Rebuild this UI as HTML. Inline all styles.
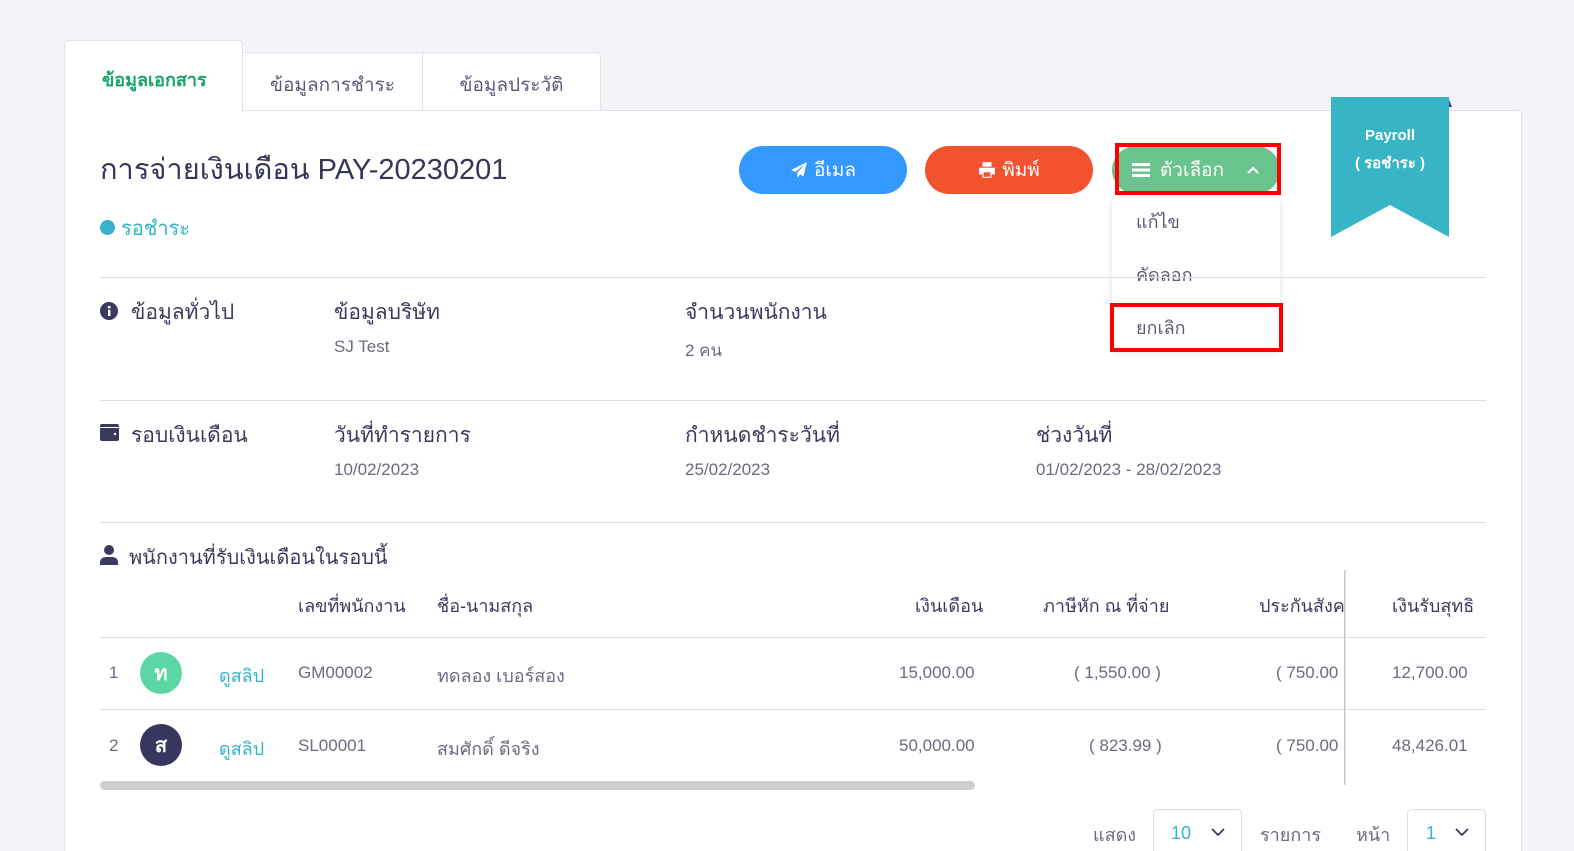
<!DOCTYPE html>
<html style="overflow:hidden;height:851px"><head><meta charset="utf-8"><style>
*{box-sizing:border-box;margin:0;padding:0}
body{width:1574px;height:851px;background:#f3f3f8;font-family:"Liberation Sans",sans-serif;color:#3a3a5e;position:relative;overflow:hidden}
.a{position:absolute;white-space:nowrap}
.card{position:absolute;left:64px;top:110px;width:1458px;height:750px;background:#fff;border:1px solid #e0e0ea;border-radius:4px}
.tab{position:absolute;background:#fff;border:1px solid #e0e0ea;border-bottom:none;text-align:center;font-size:19px;color:#5a5a78}
.hr{position:absolute;left:100px;width:1386px;height:1px;background:#dcdce6}
.lbl{font-size:21px;color:#3a3a5e}
.val{font-size:17px;color:#6b6b80}
.btn{position:absolute;height:48px;border-radius:24px;color:#fff;font-size:19px;display:flex;align-items:center;justify-content:center;gap:6px}
.th{font-size:18px;color:#3a3a5e}
.td{font-size:17px;color:#6b6b80}
.av{position:absolute;width:42px;height:42px;border-radius:50%;color:#fff;font-weight:bold;font-size:20px;display:flex;align-items:center;justify-content:center}
.sel{position:absolute;top:809px;height:50px;border:1px solid #dcdce6;border-radius:5px;background:#fff}
</style></head><body>
<div class="card"></div>
<div class="tab" style="left:64px;top:40px;width:179px;height:72px;border-radius:4px 4px 0 0;color:#1aa36a;font-weight:bold;padding-top:24px;font-size:18px;text-align:left;padding-left:37px">ข้อมูลเอกสาร</div>
<div class="tab" style="left:242px;top:52px;width:181px;height:58px;padding-top:17px;border-radius:0">ข้อมูลการชำระ</div>
<div class="tab" style="left:422px;top:52px;width:179px;height:58px;padding-top:17px;border-radius:0 4px 0 0">ข้อมูลประวัติ</div>

<div class="a" style="left:100px;top:146px;font-size:29px;color:#36365a">การจ่ายเงินเดือน PAY-20230201</div>
<div class="a" style="left:100px;top:220px;width:15px;height:15px;border-radius:50%;background:#35b3c8"></div>
<div class="a" style="left:121px;top:212px;font-size:20px;color:#35b3c8">รอชำระ</div>

<div class="btn" style="left:739px;top:146px;width:168px;background:#3399ff"><svg width="18" height="18" viewBox="0 0 16 16"><path d="M15 1L1 8l4 1.5L13 3 6.5 10.5V15l2.5-3 3 1.5z" fill="#fff"/></svg>อีเมล</div>
<div class="btn" style="left:925px;top:146px;width:168px;background:#f2522e"><svg width="18" height="18" viewBox="0 0 16 16"><path d="M4 1h8v4H4zM1 6h14v6h-3v3H4v-3H1zM5 10v4h6v-4z" fill="#fff"/></svg>พิมพ์</div>
<div class="btn" style="left:1112px;top:146px;width:168px;background:#6ac48d;gap:10px"><svg width="18" height="16" viewBox="0 0 18 16"><path d="M0 1h18v3H0zM0 6.5h18v3H0zM0 12h18v3H0z" fill="#fff"/></svg>ตัวเลือก<svg width="14" height="10" viewBox="0 0 14 10" style="margin-left:12px"><path d="M2 8l5-5 5 5" stroke="#fff" stroke-width="2.2" fill="none"/></svg></div>
<div class="a" style="left:1115px;top:143px;width:166px;height:52px;border:4px solid #ff0000"></div>

<div class="a" style="left:1112px;top:198px;width:168px;height:152px;background:#fff;border-radius:6px;box-shadow:0 2px 8px rgba(0,0,0,.12)"></div>
<div class="a" style="left:1136px;top:207px;font-size:18px;color:#5a5a70">แก้ไข</div>
<div class="a" style="left:1136px;top:260px;font-size:18px;color:#5a5a70">คัดลอก</div>
<div class="a" style="left:1136px;top:313px;font-size:18px;color:#5a5a70">ยกเลิก</div>
<div class="a" style="left:1110px;top:303px;width:173px;height:49px;border:4px solid #ff0000"></div>

<svg class="a" style="left:1330px;top:97px" width="122" height="142" viewBox="0 0 122 142"><path d="M118 0l4 10h-4z" fill="#1f4f8a"/><path d="M1 0h118v140L60 108 1 140z" fill="#37b4c6"/></svg>
<div class="a" style="left:1331px;top:122px;width:118px;text-align:center;color:#fff;font-weight:bold;font-size:15px;line-height:28px">Payroll<br>( รอชำระ )</div>

<div class="hr" style="top:277px"></div>
<svg class="a" style="left:100px;top:302px" width="18" height="18" viewBox="0 0 18 18"><circle cx="9" cy="9" r="9" fill="#3a3a5e"/><rect x="8" y="8" width="2.4" height="6" fill="#fff"/><circle cx="9.2" cy="5.2" r="1.4" fill="#fff"/></svg>
<div class="a lbl" style="left:131px;top:296px">ข้อมูลทั่วไป</div>
<div class="a lbl" style="left:334px;top:296px">ข้อมูลบริษัท</div>
<div class="a val" style="left:334px;top:337px">SJ Test</div>
<div class="a lbl" style="left:685px;top:296px">จำนวนพนักงาน</div>
<div class="a val" style="left:685px;top:337px">2 คน</div>

<div class="hr" style="top:400px"></div>
<svg class="a" style="left:100px;top:424px" width="19" height="17" viewBox="0 0 19 17"><rect x="0" y="0" width="19" height="17" rx="2" fill="#3a3a5e"/><rect x="0" y="3" width="19" height="1" fill="#fff"/><circle cx="15" cy="10" r="1.2" fill="#fff"/></svg>
<div class="a lbl" style="left:131px;top:419px">รอบเงินเดือน</div>
<div class="a lbl" style="left:334px;top:419px">วันที่ทำรายการ</div>
<div class="a val" style="left:334px;top:460px">10/02/2023</div>
<div class="a lbl" style="left:685px;top:419px">กำหนดชำระวันที่</div>
<div class="a val" style="left:685px;top:460px">25/02/2023</div>
<div class="a lbl" style="left:1036px;top:419px">ช่วงวันที่</div>
<div class="a val" style="left:1036px;top:460px">01/02/2023 - 28/02/2023</div>

<div class="hr" style="top:522px"></div>
<svg class="a" style="left:100px;top:545px" width="18" height="20" viewBox="0 0 18 20"><circle cx="9" cy="5" r="5" fill="#3a3a5e"/><path d="M0 20v-3c0-3 3-5 6-5h6c3 0 6 2 6 5v3z" fill="#3a3a5e"/></svg>
<div class="a" style="left:129px;top:541px;font-size:20px">พนักงานที่รับเงินเดือนในรอบนี้</div>

<div class="a th" style="left:298px;top:591px">เลขที่พนักงาน</div>
<div class="a th" style="left:437px;top:591px">ชื่อ-นามสกุล</div>
<div class="a th" style="left:915px;top:591px">เงินเดือน</div>
<div class="a th" style="left:1043px;top:591px">ภาษีหัก ณ ที่จ่าย</div>
<div class="a th" style="left:1259px;top:591px;width:86px;overflow:hidden">ประกันสังคม</div>
<div class="a th" style="left:1392px;top:591px">เงินรับสุทธิ</div>
<div class="hr" style="top:637px"></div>
<div class="hr" style="top:709px"></div>

<div class="a td" style="left:109px;top:663px">1</div>
<div class="av" style="left:140px;top:652px;background:#5cd6a4">ท</div>
<div class="a td" style="left:219px;top:661px;color:#35b3c8;font-size:18px">ดูสลิป</div>
<div class="a td" style="left:298px;top:663px">GM00002</div>
<div class="a td" style="left:437px;top:661px;font-size:18px">ทดลอง เบอร์สอง</div>
<div class="a td" style="left:899px;top:663px">15,000.00</div>
<div class="a td" style="left:1074px;top:663px">( 1,550.00 )</div>
<div class="a td" style="left:1276px;top:663px">( 750.00</div>
<div class="a td" style="left:1392px;top:663px">12,700.00</div>

<div class="a td" style="left:109px;top:736px">2</div>
<div class="av" style="left:140px;top:724px;background:#36365e">ส</div>
<div class="a td" style="left:219px;top:734px;color:#35b3c8;font-size:18px">ดูสลิป</div>
<div class="a td" style="left:298px;top:736px">SL00001</div>
<div class="a td" style="left:437px;top:734px;font-size:18px">สมศักดิ์ ดีจริง</div>
<div class="a td" style="left:899px;top:736px">50,000.00</div>
<div class="a td" style="left:1089px;top:736px">( 823.99 )</div>
<div class="a td" style="left:1276px;top:736px">( 750.00</div>
<div class="a td" style="left:1392px;top:736px">48,426.01</div>

<div class="a" style="left:1344px;top:570px;width:2px;height:215px;background:linear-gradient(90deg,#bbb,#eee)"></div>
<div class="a" style="left:100px;top:781px;width:875px;height:9px;border-radius:5px;background:#cfcfcf"></div>

<div class="a" style="left:1093px;top:820px;font-size:18px;color:#6b6b80">แสดง</div>
<div class="sel" style="left:1153px;width:89px"></div>
<div class="a" style="left:1171px;top:823px;font-size:18px;color:#35b3c8">10</div>
<svg class="a" style="left:1211px;top:828px" width="14" height="9"><path d="M1 1l6 6 6-6" stroke="#3a3a5e" stroke-width="1.8" fill="none"/></svg>
<div class="a" style="left:1260px;top:820px;font-size:18px;color:#6b6b80">รายการ</div>
<div class="a" style="left:1356px;top:820px;font-size:18px;color:#6b6b80">หน้า</div>
<div class="sel" style="left:1407px;width:79px"></div>
<div class="a" style="left:1426px;top:823px;font-size:18px;color:#35b3c8">1</div>
<svg class="a" style="left:1455px;top:828px" width="14" height="9"><path d="M1 1l6 6 6-6" stroke="#3a3a5e" stroke-width="1.8" fill="none"/></svg>
</body></html>
